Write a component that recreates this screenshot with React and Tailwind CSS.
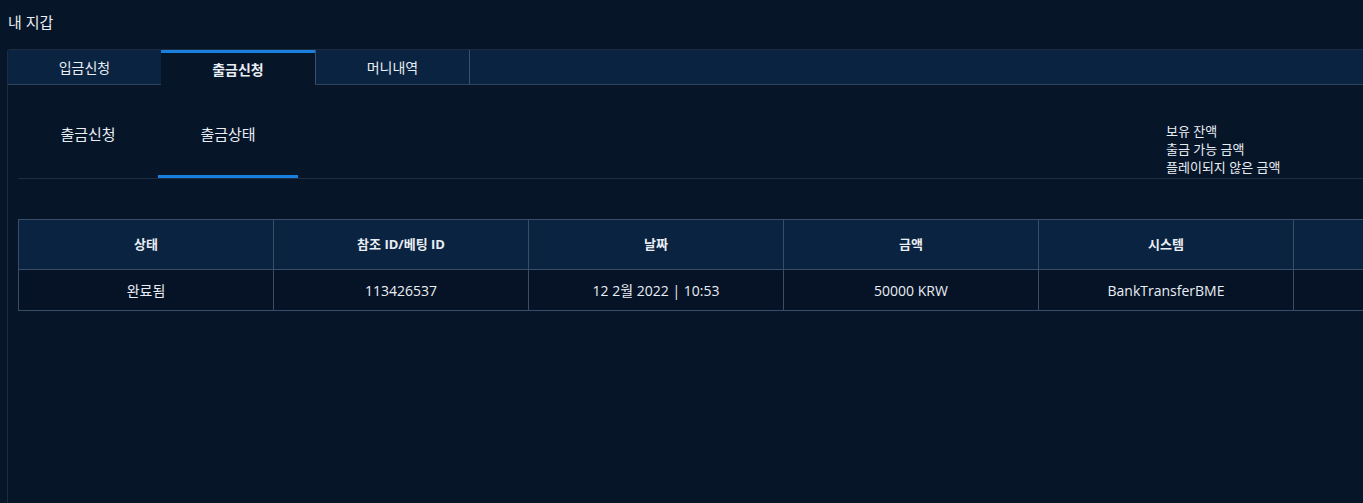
import React from "react";

const font = { fontFamily: '"Open Sans", "Noto Sans CJK KR", sans-serif' };

const mainTabs = [
  { label: "입금신청", active: false },
  { label: "출금신청", active: true },
  { label: "머니내역", active: false },
];

const columns = ["상태", "참조 ID/베팅 ID", "날짜", "금액", "시스템", ""];
const rows = [["완료됨", "113426537", "12 2월 2022 | 10:53", "50000 KRW", "BankTransferBME", ""]];

export default function App() {
  return (
    <div
      className="h-[503px] w-full overflow-hidden bg-[#061528] text-[#e9eef5]"
      style={font}
    >
      <h1 className="pl-2 pt-[12px] text-[15px] leading-[20px] font-normal">내 지갑</h1>

      <div className="ml-[7px] mt-[17px] h-[460px] overflow-hidden rounded-tl-[3px] border-l border-t border-[#1c2b3d]">
        <div className="flex h-[35px] border-b border-[#2e435c] bg-[#0a2340]">
          {mainTabs.map((tab, i) =>
            tab.active ? (
              <div
                key={tab.label}
                className="-mb-px flex w-[154px] items-center justify-center border-t-[3px] border-[#1a80e0] bg-[#061528] text-[14px] font-bold"
              >
                {tab.label}
              </div>
            ) : (
              <div
                key={tab.label}
                className={
                  "flex items-center justify-center text-[14px] " +
                  (i === 2 ? "w-[155px] border-l border-r border-[#3a516d]" : "w-[153px]")
                }
              >
                {tab.label}
              </div>
            )
          )}
        </div>

        <div className="pl-[10px] pt-[8px]">
          <div className="flex border-b border-[#1e2e40]">
            <div className="flex h-[85px] w-[140px] justify-center pt-[31px] text-[15px] leading-[20px]">
              출금신청
            </div>
            <div className="flex h-[85px] w-[140px] justify-center border-b-[3px] border-[#1a80e0] pt-[31px] text-[15px] leading-[20px]">
              출금상태
            </div>
            <div className="ml-auto w-[197px] pt-[29px] text-[13px] leading-[18px]">
              <div>보유 잔액</div>
              <div>출금 가능 금액</div>
              <div>플레이되지 않은 금액</div>
            </div>
          </div>

          <table className="mt-[40px] w-[1530px] table-fixed border-collapse">
            <thead>
              <tr className="h-[50px] bg-[#0a2340] text-[13px]">
                {columns.map((c, i) => (
                  <th key={i} className="w-[255px] border border-[#3a4d66] text-center font-bold">
                    {c}
                  </th>
                ))}
              </tr>
            </thead>
            <tbody>
              {rows.map((r, ri) => (
                <tr key={ri} className="h-[41px] bg-[#061326] text-[14px]">
                  {r.map((cell, ci) => (
                    <td key={ci} className="border border-[#3a4d66] text-center">
                      {cell}
                    </td>
                  ))}
                </tr>
              ))}
            </tbody>
          </table>
        </div>
      </div>
    </div>
  );
}
